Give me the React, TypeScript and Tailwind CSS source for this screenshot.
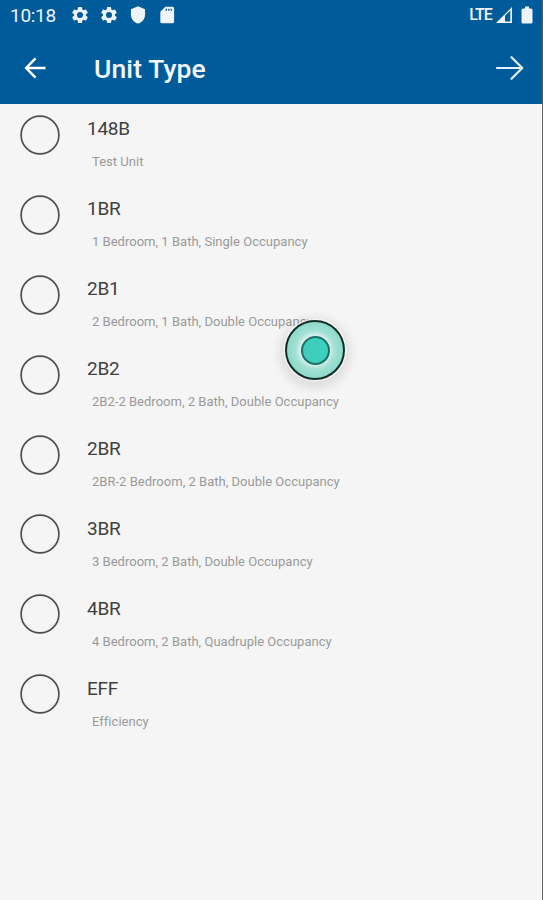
import React from 'react';

interface UnitTypeOption {
    code: string;
    description: string;
}

const unitTypes: UnitTypeOption[] = [
    { code: '148B', description: 'Test Unit' },
    { code: '1BR', description: '1 Bedroom, 1 Bath, Single Occupancy' },
    { code: '2B1', description: '2 Bedroom, 1 Bath, Double Occupancy' },
    { code: '2B2', description: '2B2-2 Bedroom, 2 Bath, Double Occupancy' },
    { code: '2BR', description: '2BR-2 Bedroom, 2 Bath, Double Occupancy' },
    { code: '3BR', description: '3 Bedroom, 2 Bath, Double Occupancy' },
    { code: '4BR', description: '4 Bedroom, 2 Bath, Quadruple Occupancy' },
    { code: 'EFF', description: 'Efficiency' },
];

const GearIcon = () => (
    <svg viewBox="0 0 24 24" className="w-5 h-5" fill="currentColor">
        <path d="M19.14 12.94c.04-.3.06-.61.06-.94 0-.32-.02-.64-.07-.94l2.03-1.58a.49.49 0 0 0 .12-.61l-1.92-3.32a.49.49 0 0 0-.59-.22l-2.39.96c-.5-.38-1.03-.7-1.62-.94l-.36-2.54a.48.48 0 0 0-.48-.41h-3.84c-.24 0-.43.17-.47.41l-.36 2.54c-.59.24-1.13.57-1.62.94l-2.39-.96a.48.48 0 0 0-.59.22L2.74 8.87c-.12.21-.08.47.12.61l2.03 1.58c-.05.3-.09.63-.09.94s.02.64.07.94l-2.03 1.58a.49.49 0 0 0-.12.61l1.92 3.32c.12.22.37.29.59.22l2.39-.96c.5.38 1.03.7 1.62.94l.36 2.54c.05.24.24.41.48.41h3.84c.24 0 .44-.17.47-.41l.36-2.54c.59-.24 1.13-.56 1.62-.94l2.39.96c.22.08.47 0 .59-.22l1.92-3.32a.48.48 0 0 0-.12-.61zM12 15.6A3.6 3.6 0 1 1 12 8.4a3.6 3.6 0 0 1 0 7.2z" />
    </svg>
);

const StatusBar = () => (
    <div className="flex items-center h-[30px] pl-[10px] pr-[9px] text-[#eef4fa]">
        <span className="w-[60px] text-[19px] leading-[30px] tracking-[-0.3px] mt-px">10:18</span>
        <div className="flex items-center gap-[9px]">
            <GearIcon />
            <GearIcon />
            <svg viewBox="0 0 24 24" className="w-5 h-5" fill="currentColor">
                <path d="M12 1.5 3.5 5v6c0 5.4 3.6 10 8.5 11.3 4.9-1.3 8.5-5.9 8.5-11.3V5z" />
            </svg>
            <svg viewBox="0 0 24 24" className="w-5 h-5" fill="currentColor">
                <path d="M18.5 2H10L4 8v12a2 2 0 0 0 2 2h12.500a2 2 0 0 0 2-2V4a2 2 0 0 0-2-2zM12 7h-1.600V4.400H12zm3 0h-1.600V4.400H15zm3 0h-1.600V4.400H18z" />
            </svg>
        </div>

        <div className="ml-auto flex items-center">
            <span className="text-base leading-[30px] tracking-[-0.9px] font-medium">LTE</span>
            <svg viewBox="0 0 18 18" className="w-[18px] h-[18px] ml-[3px]">
                <path fillRule="evenodd" fill="currentColor" d="M17 1v16H1zM10 9.800v5.700h5.300V4.500z" />
            </svg>
            <svg viewBox="0 0 12 18" className="w-3 h-[18px] ml-[8px]" fill="currentColor">
                <path d="M4 .5h4v2h2A1.500 1.500 0 0 1 11.500 4v12a1.500 1.500 0 0 1-1.500 1.500H2A1.500 1.500 0 0 1 .5 16V4A1.500 1.500 0 0 1 2 2.500h2z" />
            </svg>
        </div>
    </div>
);

const UnitTypeRow: React.FC<UnitTypeOption> = ({ code, description }) => (
    <li className="flex h-[79.9px] pl-5 pt-[11px]">
        <svg viewBox="0 0 40 40" className="w-10 h-10 shrink-0" fill="none" stroke="#505050" strokeWidth="1.7">
            <circle cx="20" cy="20" r="18.900" />
        </svg>
        <div className="ml-[27px]">
            <div className="text-[19px] leading-6 tracking-[-0.25px] text-[#404040] mt-[2.400px]">{code}</div>
            <div className="ml-[5px] mt-[13px] text-[13px] leading-4 tracking-[0.02px] text-[#9a9a9a] whitespace-nowrap">
                {description}
            </div>
        </div>
    </li>
);

export default function App() {
    return (
        <div className="relative w-full h-[900px] overflow-hidden bg-[#f5f5f5] border-r border-[#606060] font-['Roboto',sans-serif]">
            {/* Header */}
            <header className="h-[104px] bg-[#005b9a]">
                <StatusBar />
                <div className="flex items-center h-[75px] pl-[24px] pr-[18px] text-white">
                    <svg viewBox="0 0 22 22" className="w-[22px] h-[22px]" fill="none" stroke="currentColor" strokeWidth="2.5">
                        <path d="M21.500 11H2.500M11.500 1.400 2.200 11l9.300 9.600" />
                    </svg>
                    <h1 className="ml-[48px] mt-[3px] text-[26.5px] leading-8 tracking-[0.1px] font-medium text-[#f2f7fc]">Unit Type</h1>
                    <svg viewBox="0 0 28 24" className="ml-auto w-7 h-6" fill="none" stroke="#e4f0fa" strokeWidth="2.2" strokeLinecap="round" strokeLinejoin="round">
                        <path d="M1 12h25M15.500 1.200 26.300 12 15.500 22.800" />
                    </svg>
                </div>
            </header>

            {/* Options */}
            <ul className="h-[796px] border-r border-white">
                {unitTypes.map((unit) => (
                    <UnitTypeRow key={unit.code} {...unit} />
                ))}
            </ul>

            {/* Touch pointer */}
            <div className="absolute left-[285px] top-[320px] w-[60px] h-[60px] rounded-full border-2 border-[#08221d] bg-[radial-gradient(circle_closest-side,#d5f0ea_52%,#9fdfd2_70%,#86d9c9_100%)] opacity-95 shadow-[0_0_0_1.5px_rgba(255,255,255,0.6),0_3px_10px_6px_rgba(0,0,0,0.09)] flex items-center justify-center">
                <div className="w-[29px] h-[29px] rounded-full border-2 border-[#126b5e] bg-[#35cdb9]" />
            </div>
        </div>
    );
}
